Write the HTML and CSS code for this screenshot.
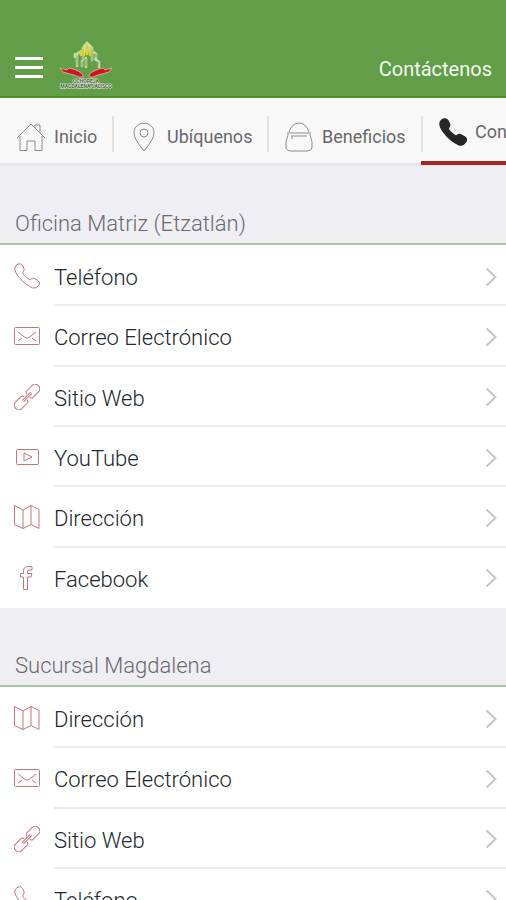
FILE: index.html
```
<!DOCTYPE html>
<html lang="es">
<head>
<meta charset="utf-8">
<meta name="viewport" content="width=device-width, initial-scale=1">
<title>Contáctenos</title>
<link rel="stylesheet" href="styles.css">
</head>
<body>
<svg class="sprite" aria-hidden="true">
  <symbol id="phone" viewBox="0 0 26 26"><path d="M4 1Q7 0 8.500 2.500L10 5.500Q10.500 7.500 9 9Q8.500 10 9.500 11.500Q11.500 14 14.500 16Q16 17 17 16Q18.500 14.500 20.500 15.500L24 17.500Q26.500 19.500 25 22Q22.500 26 18.500 25Q11.500 22 6 15.500Q1 9.500 .8 6Q.5 2.500 4 1Z"/></symbol>
  <symbol id="mail" viewBox="0 0 26 26"><rect x=".5" y="4.500" width="25" height="17" rx="1"/><path d="M4 9L11 14.500Q13 16 15 14.500L22 9M4 18L8 15M22 18L18 15"/></symbol>
  <symbol id="link" viewBox="0 0 26 26"><g transform="rotate(-45 13 13)"><path d="M11 11V10.500Q11 8.500 9 8.500H1Q-3 8.500-3 13Q-3 17.500 1 17.500H9Q11 17.500 11 15M15 11Q15 8.500 17 8.500H25Q29 8.500 29 13Q29 17.500 25 17.500H17Q15 17.500 15 15.500V15M7 12H19M7 14H19"/></g></symbol>
  <symbol id="video" viewBox="0 0 26 26"><rect x="2.500" y="5.500" width="22" height="15" rx="1"/><path d="M10 9V17L18 13Z"/></symbol>
  <symbol id="map" viewBox="0 0 26 26"><path d="M.5 1.500L9 6L17 1.500L25 5.500V24.500L17 20.500L9 24.500L.5 20.500ZM9 6V24.500M17 1.500V20.500"/></symbol>
  <symbol id="facebook" viewBox="0 0 26 26"><path d="M18 1.500H14Q9.500 1.500 9.500 6V8.500H6.500V12H9.500V24.500H13.500V12H17L18 8.500H13.500V6.500Q13.500 5 15 5H18Z"/></symbol>
  <symbol id="chevron" viewBox="0 0 12 20"><path d="M1.500 1.500L10.500 10L1.500 18.500"/></symbol>
</svg>

<header class="topbar">
  <button class="menu" type="button" aria-label="Menú"><span></span><span></span><span></span></button>
  <svg class="logo" viewBox="0 0 58 50" role="img" aria-label="Magdalena Jalisco">
    <g fill="none" stroke-linecap="round">
      <path stroke="#c5dba9" stroke-width="2.600" d="M26 19V7L30 2L35 7V19M20 25V13L26 9M35 10L39 13V17M38 18L42 21V26M18 13V16M29 17V26M25 20V25"/>
      <path stroke="#84a25c" stroke-width="1" d="M26 19V9M35 9V19M20 24V15M39 13V16M41 21V25M29 18V25M25 21V25M35 21V25"/>
      <path stroke="#d7d43a" stroke-width="2.600" d="M27 7V14M30 5V13M33 8V14M24 11V14"/>
      <path stroke="#f0ed9a" stroke-width="1" d="M28 4V11M32 4V10"/>
    </g>
    <g fill="#c91622" stroke="#efb6a7" stroke-width=".8">
      <path d="M3 27L10 29L12 27L16 28Q19 29 21 30Q24 31 26 34V36H22Q18 34 13 33L6 31Z"/>
      <path d="M55 27L48 29L46 27L42 28Q39 29 37 30Q34 31 32 34V36H36Q40 34 45 33L52 31Z"/>
    </g>
    <g class="logo-text"><text x="29" y="42">OCHOREJA</text><text x="29" y="47">MAGDALENA JALISCO</text></g>
  </svg>
  <h1>Contáctenos</h1>
</header>

<nav class="tabs">
  <a class="tab home" href="#inicio"><svg viewBox="0 0 30 30"><path d="M1 16L15 2L29 16M4 14V28.500H11V19H19V28.500H26V14M19 6V3H24V11"/></svg>Inicio</a>
  <a class="tab place" href="#ubiquenos"><svg viewBox="0 0 30 30"><path d="M15 29Q5 17 5 11C5-2 25-2 25 11Q25 17 15 29Z"/><circle cx="15" cy="11" r="4"/></svg>Ubíquenos</a>
  <a class="tab benefits" href="#beneficios"><svg viewBox="0 0 30 30"><path d="M5 10Q8 1 15 1Q22 1 25 10M4 10V13Q1 20 2 26Q3 29 7 29H23Q27 29 28 26Q29 20 26 13V10M5 11H25M7 14H23M8 14V17"/></svg>Beneficios</a>
  <a class="tab active" href="#contactenos" aria-current="page"><svg viewBox="0 0 26 26"><use href="#phone"/></svg>Contáctenos</a>
</nav>

<main>
  <section>
    <h2>Oficina Matriz (Etzatlán)</h2>
    <ul class="contacts six">
      <li><a href="#telefono"><svg class="icon"><use href="#phone"/></svg><span class="label">Teléfono<svg class="chevron"><use href="#chevron"/></svg></span></a></li>
      <li><a href="#correo"><svg class="icon"><use href="#mail"/></svg><span class="label">Correo Electrónico<svg class="chevron"><use href="#chevron"/></svg></span></a></li>
      <li><a href="#web"><svg class="icon"><use href="#link"/></svg><span class="label">Sitio Web<svg class="chevron"><use href="#chevron"/></svg></span></a></li>
      <li><a href="#youtube"><svg class="icon"><use href="#video"/></svg><span class="label">YouTube<svg class="chevron"><use href="#chevron"/></svg></span></a></li>
      <li><a href="#direccion"><svg class="icon"><use href="#map"/></svg><span class="label">Dirección<svg class="chevron"><use href="#chevron"/></svg></span></a></li>
      <li><a href="#facebook-page"><svg class="icon"><use href="#facebook"/></svg><span class="label">Facebook<svg class="chevron"><use href="#chevron"/></svg></span></a></li>
    </ul>
  </section>
  <section>
    <h2>Sucursal Magdalena</h2>
    <ul class="contacts four">
      <li><a href="#direccion-2"><svg class="icon"><use href="#map"/></svg><span class="label">Dirección<svg class="chevron"><use href="#chevron"/></svg></span></a></li>
      <li><a href="#correo-2"><svg class="icon"><use href="#mail"/></svg><span class="label">Correo Electrónico<svg class="chevron"><use href="#chevron"/></svg></span></a></li>
      <li><a href="#web-2"><svg class="icon"><use href="#link"/></svg><span class="label">Sitio Web<svg class="chevron"><use href="#chevron"/></svg></span></a></li>
      <li><a href="#telefono-2"><svg class="icon"><use href="#phone"/></svg><span class="label">Teléfono<svg class="chevron"><use href="#chevron"/></svg></span></a></li>
    </ul>
  </section>
</main>
</body>
</html>
```
FILE: styles.css
```
* { box-sizing: border-box; }
body {
  margin: 0;
  background: #efeef3;
  color: #202830;
  font-family: Roboto, "Liberation Sans", sans-serif;
  overflow-x: hidden;
}
a { color: inherit; text-decoration: none; }
.sprite { display: none; }

.topbar {
  display: flex;
  align-items: center;
  height: 98px;
  padding: 36px 14px 0 15px;
  background: #629e48;
  border-bottom: 2px solid #4f911f;
  color: #f2f8ef;
}
.menu {
  display: grid;
  gap: 6px;
  width: 28px;
  margin-top: 2px;
  padding: 0;
  border: 0;
  background: none;
}
.menu span { height: 3px; background: #fff; }
.logo { width: 58px; height: 50px; margin-left: 14px; }
.logo-text {
  fill: #4d5d44;
  stroke: #e6eee2;
  stroke-width: 1px;
  paint-order: stroke;
  font-size: 5px;
  font-weight: 700;
  text-anchor: middle;
}
h1 {
  margin: 6px 0 0 auto;
  font-size: 20px;
  font-weight: 400;
  line-height: 24px;
}

.tabs {
  display: flex;
  height: 68px;
  background: #f8f8f8;
  border-bottom: 3px solid #e6e6e9;
  overflow-x: clip;
  font-size: 18px;
  color: #68686a;
}
.tab {
  position: relative;
  display: flex;
  flex: none;
  align-items: center;
  gap: 8px;
  padding-top: 12px;
}
.tab svg {
  width: 30px;
  height: 30px;
  fill: none;
  stroke: #8b8b8d;
  stroke-width: 1px;
}
.tab + .tab::before {
  content: "";
  position: absolute;
  left: 0;
  top: 18px;
  width: 2px;
  height: 36px;
  background: #e2e2e4;
}
.home { width: 112px; padding-left: 16px; }
.place { width: 155px; padding-left: 17px; }
.benefits { width: 154px; padding-left: 17px; }
.tabs .active {
  height: 67px;
  padding: 4px 18px 0;
  border-bottom: 4px solid #a32624;
}
.active svg { width: 28px; height: 28px; }
.tabs .active svg { fill: #262626; stroke: #262626; }

h2 {
  display: flex;
  align-items: flex-end;
  min-height: 79px;
  margin: 0;
  padding: 0 15px 5px;
  border-bottom: 2px solid #a7c5a3;
  color: #6a6a70;
  font-size: 22px;
  font-weight: 300;
  line-height: 28px;
}
.contacts {
  display: grid;
  grid-auto-rows: 1fr;
  margin: 0;
  padding: 1px 0 0;
  background: #fff;
  list-style: none;
}
.six { min-height: 363px; }
.four { min-height: 242px; }
.contacts a {
  display: flex;
  height: 100%;
  padding-left: 14px;
}
.icon {
  flex: none;
  width: 26px;
  height: 26px;
  margin: 17px 14px 0 0;
  fill: none;
  stroke: #ca7476;
  stroke-width: 1px;
}
.label {
  display: flex;
  flex: 1;
  align-items: center;
  justify-content: space-between;
  padding: 5px 9px 0 0;
  border-bottom: 2px solid #ececef;
  font-size: 22px;
  font-weight: 300;
}
li:last-child .label { border-bottom-color: transparent; }
.chevron {
  width: 12px;
  height: 20px;
  margin-bottom: 2px;
  fill: none;
  stroke: #c7c7ca;
  stroke-width: 2px;
}
```
